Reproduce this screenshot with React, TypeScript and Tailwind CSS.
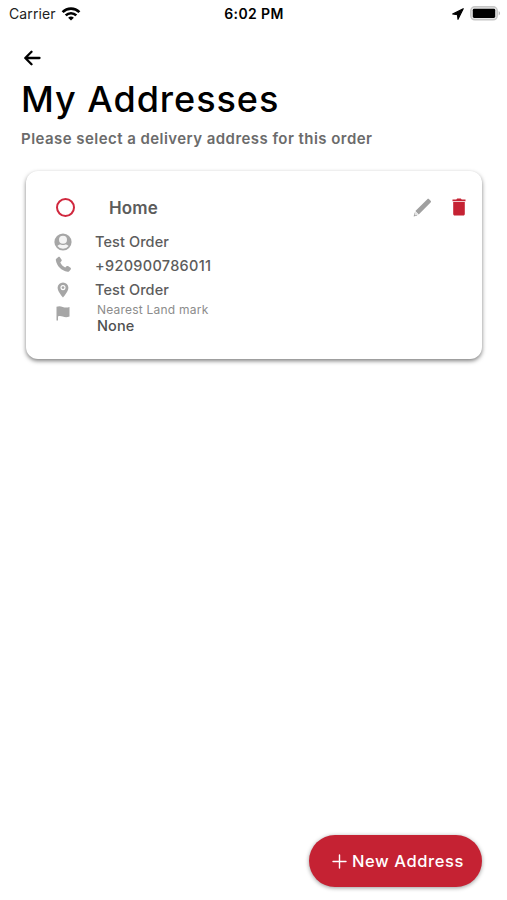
import React from 'react';

interface Address {
  label: string;
  name: string;
  phone: string;
  street: string;
  landmark: string;
}

const ADDRESSES: Address[] = [
  {
    label: 'Home',
    name: 'Test Order',
    phone: '+920900786011',
    street: 'Test Order',
    landmark: 'None',
  },
];

/* ----- Icons ----- */
function WifiIcon() {
  return (
    <svg width="20" height="14" viewBox="0 0 20 14" fill="none" stroke="#000" strokeWidth="2.7">
      <path d="M1.6 5.1a12 12 0 0 1 16.8 0" />
      <path d="M4.7 8.4a7.6 7.6 0 0 1 10.6 0" />
      <path d="M10 13.6 7.1 10.8a4.2 4.2 0 0 1 5.8 0z" fill="#000" stroke="none" />
    </svg>
  );
}

function LocationArrowIcon() {
  return (
    <svg width="12" height="12" viewBox="0 0 11 11" fill="#000">
      <path d="M10.3.6.6 5.5l4.4.7.5 4.2z" stroke="#000" strokeWidth="1" strokeLinejoin="round" />
    </svg>
  );
}

function BatteryIcon() {
  return (
    <svg width="31" height="15" viewBox="0 0 31 15">
      <rect x=".8" y=".8" width="26.4" height="13" rx="4" fill="#e6e6e6" stroke="#c6c6c6" strokeWidth="1.5" />
      <rect x="2.8" y="2.8" width="22.4" height="9.2" rx="1.4" fill="#000" />
      <path d="M28.7 5.1c1.8.8 1.8 3.6 0 4.4z" fill="#b5b5b5" />
    </svg>
  );
}

function BackIcon() {
  return (
    <svg width="17" height="16" viewBox="0 0 17 16" fill="none" stroke="#000" strokeWidth="2.3" strokeLinecap="round" strokeLinejoin="round">
      <path d="M15.5 8H1.4M7.5 1.8 1.3 8l6.2 6.2" />
    </svg>
  );
}

function PersonIcon() {
  return (
    <svg width="18" height="18" viewBox="0 0 18 18">
      <circle cx="9" cy="9" r="8.6" fill="#a6a6a6" />
      <circle cx="9" cy="6.8" r="4" fill="#f4f4f4" />
      <path d="M3.4 13c1.2-1.3 2.2-1.5 3.3-1.5 1.500.7 3.100.7 4.600 0 1.100 0 2.100.2 3.300 1.500A7 7 0 0 1 9 15.800 7 7 0 0 1 3.400 13z" fill="#f4f4f4" />
    </svg>
  );
}

function PhoneIcon() {
  return (
    <svg width="17" height="17" viewBox="0 0 17 17" fill="#a6a6a6">
      <path d="M1.3 2.7 3.3 1c.5-.4 1.2-.3 1.6.2l1.7 2.5c.3.5.3 1-.1 1.400L5.300 6.400c1 2.100 2.700 3.900 4.900 5l1.300-1.200c.4-.4 1-.4 1.500-.1l2.500 1.700c.5.4.6 1.100.2 1.600l-1.500 1.900c-.4.4-1 .6-1.600.5C6.400 14.800 1.800 10.300.8 4.100c-.1-.6.1-1.100.5-1.400z" />
    </svg>
  );
}

function PinIcon() {
  return (
    <svg width="12" height="16" viewBox="0 0 12 16">
      <path d="M6 .4A5.400 5.400 0 0 0 .6 5.800C.6 9.700 6 15.600 6 15.600s5.400-5.900 5.400-9.800A5.400 5.400 0 0 0 6 .4z" fill="#a6a6a6" />
      <circle cx="6" cy="5.600" r="2" fill="#a6a6a6" stroke="#fff" strokeWidth="1.100" />
    </svg>
  );
}

function FlagIcon() {
  return (
    <svg width="14" height="15" viewBox="0 0 14 15" fill="#a6a6a6">
      <path d="M.5.8c2.200-1 4.200-.7 6.200.1 2.200.9 4.400.9 6.800.1v9.600c-2.400.8-4.600.7-6.800 0-1.700-.6-3.200-.7-4.700-.2v4.200H.5z" />
    </svg>
  );
}

function PencilIcon() {
  return (
    <svg width="19" height="19" viewBox="0 0 19 19">
      <path d="m1.600 14.600-1 3.800 3.800-1z" fill="#a0a0a0" />
      <path d="M2.400 13.100 14.300 1.200c.6-.6 1.200-.6 1.800 0l1.500 1.600c.6.6.6 1.200 0 1.800L5.700 16.500z" fill="#a0a0a0" />
      <path d="m2.300 13.600 3 3-2.700.8-1.100-1.100z" fill="#e4e4e4" />
    </svg>
  );
}

function TrashIcon() {
  return (
    <svg width="14" height="18" viewBox="0 0 14 18" fill="#c52233">
      <path d="M.5 1.500h3.800L5.200.6h3.600l.9.900h3.800v1.700H.5z" />
      <path d="M1.200 4.100h11.600v11.800c0 .9-.6 1.500-1.500 1.500H2.700c-.9 0-1.500-.6-1.500-1.500z" />
    </svg>
  );
}

function PlusIcon() {
  return (
    <svg width="15" height="15" viewBox="0 0 15 15" fill="none" stroke="#fff" strokeWidth="1.4" strokeLinecap="round">
      <path d="M7.500 1v13M1 7.500h13" />
    </svg>
  );
}

/* ----- Components ----- */
function StatusBar() {
  return (
    <div className="grid h-[27px] grid-cols-3 items-center pr-1.5 pl-[9px] text-[#222]">
      <div className="flex items-center gap-[5px]">
        <span className="text-[14px] tracking-[0.1px]">Carrier</span>
        <WifiIcon />
      </div>
      <span className="-ml-0.5 text-center text-[14px] font-semibold tracking-[0.4px] text-black">6:02 PM</span>
      <div className="flex items-center justify-end gap-1.5">
        <LocationArrowIcon />
        <BatteryIcon />
      </div>
    </div>
  );
}

function AddressRow({ icon, children }: { icon: React.ReactNode; children: React.ReactNode }) {
  return (
    <div className="flex h-6 items-center">
      <span className="flex w-[41px] shrink-0">
        <span className="flex w-[18px] justify-center">{icon}</span>
      </span>
      <span className="text-[14.5px] font-medium tracking-[0.1px] text-[#5c5c5c]">{children}</span>
    </div>
  );
}

function AddressCard({ address }: { address: Address }) {
  return (
    <section className="mx-[26px] h-[188px] w-[456px] rounded-xl bg-white pt-[23px] pr-4 pl-7 shadow-[0_2px_4px_rgba(0,0,0,0.5)]">
      <div className="flex h-[26px] items-center pl-[2px]">
        <button aria-label={address.label} className="h-[19px] w-[19px] rounded-full border-2 border-[#d0283e]" />
        <h2 className="mt-[3px] ml-[34px] flex-1 text-[17px] font-semibold tracking-[0.1px] text-[#5c5c5c]">{address.label}</h2>
        <div className="flex items-center gap-5">
          <PencilIcon />
          <TrashIcon />
        </div>
      </div>

      <div className="mt-[10px]">
        <AddressRow icon={<PersonIcon />}>{address.name}</AddressRow>
        <AddressRow icon={<span className="-mt-1"><PhoneIcon /></span>}>
          <span className="tracking-[0.3px]">{address.phone}</span>
        </AddressRow>
        <AddressRow icon={<PinIcon />}>{address.street}</AddressRow>
        <div className="flex">
          <span className="flex w-[43px] shrink-0 justify-start pt-[4px] pl-[2px]">
            <FlagIcon />
          </span>
          <div className="flex flex-col">
            <span className="text-[12px] leading-4 tracking-[0.22px] text-[#8c8c8c]">Nearest Land mark</span>
            <span className="text-[14.5px] leading-4 font-medium tracking-[0.1px] text-[#505050]">{address.landmark}</span>
          </div>
        </div>
      </div>
    </section>
  );
}

export default function App() {
  return (
    <main className="flex h-[900px] w-[507px] flex-col overflow-hidden bg-white font-['Inter',sans-serif]">
      <StatusBar />

      <header className="px-[21px] pt-[23px]">
        <button aria-label="Back" className="ml-[3px] block">
          <BackIcon />
        </button>
        <h1 className="mt-[10px] text-[36px] leading-[46px] font-medium tracking-[0.95px] text-black">My Addresses</h1>
        <p className="mt-[7px] text-[15px] leading-5 font-semibold tracking-[0.45px] text-[#6b6b6b]">
          Please select a delivery address for this order
        </p>
      </header>

      <div className="mt-[22px] flex-1">
        {ADDRESSES.map((address) => (
          <AddressCard key={address.label} address={address} />
        ))}
      </div>

      <footer className="flex justify-end pr-[25px] pb-[13px]">
        <button className="flex h-[52px] w-[173px] items-center justify-center gap-[5px] rounded-full bg-[#c52233] pl-[5px] text-[16.5px] font-medium text-white shadow-[0_1px_4px_rgba(0,0,0,0.4)]">
          <PlusIcon />
          <span className="tracking-[0.6px]">New Address</span>
        </button>
      </footer>
    </main>
  );
}
